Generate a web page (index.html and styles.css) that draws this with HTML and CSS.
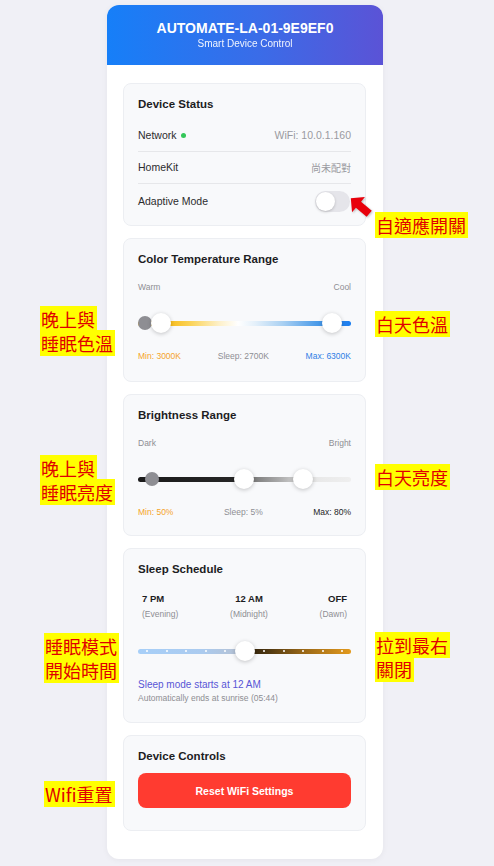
FILE: index.html
```html
<!DOCTYPE html>
<html>
<head>
<meta charset="utf-8">
<link rel="stylesheet" href="styles.css">
</head>
<body>
<div class="page">
  <div class="card">
    <div class="header">
      <div class="title">AUTOMATE-LA-01-9E9EF0</div>
      <div class="subtitle">Smart Device Control</div>
    </div>
    <div class="body">
      <section class="section status">
        <h2 class="sec-title">Device Status</h2>
        <div class="row">
          <span class="row-label">Network <span class="dot"></span></span>
          <span class="row-value">WiFi: 10.0.1.160</span>
        </div>
        <div class="row">
          <span class="row-label">HomeKit</span>
          <span class="row-value cjk">尚未配對</span>
        </div>
        <div class="row last">
          <span class="row-label">Adaptive Mode</span>
          <span class="toggle"><span class="knob"></span></span>
        </div>
      </section>

      <section class="section range">
        <h2 class="sec-title">Color Temperature Range</h2>
        <div class="ends"><span>Warm</span><span>Cool</span></div>
        <div class="slider">
          <div class="track temp"></div>
          <span class="marker" style="left:3.3%"></span>
          <span class="thumb" style="left:10.8%"></span>
          <span class="thumb" style="left:91%"></span>
        </div>
        <div class="vals"><span class="orange">Min: 3000K</span><span class="gray">Sleep: 2700K</span><span class="blue">Max: 6300K</span></div>
      </section>

      <section class="section range brightness">
        <h2 class="sec-title">Brightness Range</h2>
        <div class="ends"><span>Dark</span><span>Bright</span></div>
        <div class="slider">
          <div class="track bright"></div>
          <span class="marker" style="left:6.6%"></span>
          <span class="thumb" style="left:49.8%"></span>
          <span class="thumb" style="left:77.5%"></span>
        </div>
        <div class="vals"><span class="orange">Min: 50%</span><span class="gray">Sleep: 5%</span><span class="dark">Max: 80%</span></div>
      </section>

      <section class="section sleep">
        <h2 class="sec-title">Sleep Schedule</h2>
        <div class="times">
          <div class="tcol left"><div class="t">7 PM</div><div class="ts">(Evening)</div></div>
          <div class="tcol center"><div class="t">12 AM</div><div class="ts">(Midnight)</div></div>
          <div class="tcol right"><div class="t">OFF</div><div class="ts">(Dawn)</div></div>
        </div>
        <div class="slider sleep-slider">
          <div class="track sleepbar">
            <i></i><i></i><i></i><i></i><i></i><i></i><i></i><i></i><i></i><i></i><i></i>
          </div>
          <span class="thumb" style="left:50.2%"></span>
        </div>
        <div class="sleep-msg">Sleep mode starts at 12 AM</div>
        <div class="sleep-sub">Automatically ends at sunrise (05:44)</div>
      </section>

      <section class="section controls">
        <h2 class="sec-title">Device Controls</h2>
        <button class="reset">Reset WiFi Settings</button>
      </section>
    </div>
  </div>

  <svg class="arrow" width="28" height="28" viewBox="0 0 28 28">
    <g transform="rotate(40 14 14)">
      <polygon points="2,14 12,4 12,10 26,10 26,18 12,18 12,24" fill="#e8000b"/>
    </g>
  </svg>

  <div class="note n-adaptive"><span>自適應開關</span></div>
  <div class="note n-temp-night"><span>晚上與</span><br><span>睡眠色溫</span></div>
  <div class="note n-temp-day"><span>白天色溫</span></div>
  <div class="note n-bri-night"><span>晚上與</span><br><span>睡眠亮度</span></div>
  <div class="note n-bri-day"><span>白天亮度</span></div>
  <div class="note n-sleep"><span>睡眠模式</span><br><span>開始時間</span></div>
  <div class="note n-off"><span>拉到最右</span><br><span>關閉</span></div>
  <div class="note n-wifi"><span>Wifi重置</span></div>
</div>
</body>
</html>
```

FILE: styles.css
```css
* { box-sizing: border-box; }
html, body { margin: 0; padding: 0; }
body {
  background: #f0f0f6;
  font-family: "Liberation Sans", Arial, "Noto Sans CJK TC", sans-serif;
  color: #1d1d1f;
}
.page {
  position: relative;
  width: 494px;
  height: 866px;
  padding: 5px 0 0 107px;
}
.card {
  width: 276px;
  background: #fff;
  border-radius: 12px;
  overflow: hidden;
  box-shadow: 0 1px 6px rgba(0,0,0,0.05);
}
.header {
  height: 60px;
  background: linear-gradient(90deg, #167ff8 0%, #3a6ce8 55%, #5b53d6 100%);
  color: #fff;
  text-align: center;
  padding-top: 15px;
}
.title { font-weight: bold; font-size: 14px; line-height: 16px; }
.subtitle { font-size: 10px; line-height: 13px; margin-top: 1px; opacity: 0.92; }
.body {
  padding: 18px 17px 28px 16px;
  display: flex;
  flex-direction: column;
  gap: 12px;
}
.section {
  background: #f8f9fb;
  border: 1px solid #eceef2;
  border-radius: 8px;
  padding: 12px 14px 19px 14px;
}
.sec-title {
  margin: 0;
  font-size: 11.5px;
  line-height: 16px;
  font-weight: bold;
  color: #1d1d1f;
}
/* status */
.section.status { padding-bottom: 6px; }
.row {
  display: flex;
  justify-content: space-between;
  align-items: center;
  font-size: 10.5px;
  line-height: 15px;
  padding: 8px 0;
  border-bottom: 1px solid #e6e7ea;
}
.row:first-of-type { margin-top: 8px; }
.row.last { border-bottom: none; padding: 7px 0; }
.row-label { color: #2c2c2e; display: flex; align-items: center; gap: 4px; }
.row-value { color: #9a9aa0; }
.cjk { font-family: "Noto Sans CJK TC", sans-serif; font-size: 10px; }
.dot { width: 5px; height: 5px; border-radius: 50%; background: #34c759; display: inline-block; }
.toggle {
  width: 35px; height: 21px; border-radius: 11px;
  background: #e5e5ea; position: relative; margin-right: 1px;
}
.knob {
  position: absolute; left: 1px; top: 1px; width: 19px; height: 19px;
  border-radius: 50%; background: #fff; box-shadow: 0 1px 3px rgba(0,0,0,0.2);
}
/* ranges */
.section.brightness { padding-bottom: 17px; }
.ends {
  display: flex; justify-content: space-between;
  font-size: 8.5px; line-height: 12px; color: #8e8e93;
  margin-top: 14px;
}
.slider {
  position: relative;
  height: 28px;
  margin-top: 16px;
  display: flex;
  align-items: center;
}
.track {
  width: 100%;
  height: 5px;
  border-radius: 3px;
}
.track.temp {
  background: linear-gradient(90deg, #f5ab00 0%, #f6b200 10%, #fbd45a 25%, #fdf0c8 38%, #ffffff 47%, #e4f0fa 55%, #a9d0f2 68%, #4b9be9 84%, #1a7df0 100%);
}
.track.bright {
  background: linear-gradient(90deg, #1a1a1a 0%, #262626 46%, #6f6f6f 51%, #a9a9a9 66%, #d6d6d6 76%, #e9e9e9 85%, #efefef 100%);
}
.marker {
  position: absolute; top: 50%;
  width: 14px; height: 14px; border-radius: 50%;
  background: #8e8e93;
  transform: translate(-50%, -50%);
}
.thumb {
  position: absolute; top: 50%;
  width: 20px; height: 20px; border-radius: 50%;
  background: #fff;
  box-shadow: 0 1px 4px rgba(0,0,0,0.22);
  transform: translate(-50%, -50%);
}
.vals {
  display: flex; justify-content: space-between;
  font-size: 8.5px; line-height: 12px;
  margin-top: 13px;
}
.orange { color: #f5a42a; }
.gray { color: #8e8e93; }
.blue { color: #2f7fe6; }
.dark { color: #1d1d1f; }
/* sleep */
.section.sleep { padding-top: 12px; padding-bottom: 18px; }
.times { display: flex; justify-content: space-between; margin-top: 15px; padding: 0 4px; }
.tcol.left { text-align: left; }
.tcol.center { text-align: center; }
.tcol.right { text-align: right; }
.t { font-size: 9.5px; line-height: 14px; font-weight: bold; color: #1d1d1f; }
.ts { font-size: 8.5px; line-height: 12px; color: #8e8e93; margin-top: 2px; }
.sleep-slider { margin-top: 17px; }
.track.sleepbar {
  height: 5px;
  display: flex; justify-content: space-between; align-items: center;
  padding: 0 8px;
  background: linear-gradient(90deg, #a7cff8 0%, #abcbef 30%, #b4c2d6 46%, #c2c6cc 50%, #2c1f0c 50%, #4a3410 60%, #9a6817 78%, #e39a1d 100%);
}
.track.sleepbar i { display: block; width: 2px; height: 2px; border-radius: 50%; background: #fff; }
.sleep-msg { font-size: 10px; line-height: 13px; color: #5856d6; margin-top: 13px; }
.sleep-sub { font-size: 8.5px; line-height: 12px; color: #8e8e93; margin-top: 1px; }
/* controls */
.section.controls { padding-bottom: 22px; }
.reset {
  display: block; width: 100%; height: 35px; margin-top: 9px;
  border: none; border-radius: 8px;
  background: #ff3b30; color: #fff;
  font-family: "Liberation Sans", Arial, sans-serif;
  font-weight: bold; font-size: 10.5px;
}
/* annotations */
.arrow { position: absolute; left: 346px; top: 192px; filter: drop-shadow(1px 1px 1px rgba(0,0,0,0.25)); }
.note {
  position: absolute;
  font-family: "Noto Sans CJK TC", "Noto Sans CJK SC", sans-serif;
  font-size: 18px;
  line-height: 24px;
  color: #e00000;
}
.note span { background: #ffff00; padding: 0 2px 0 1px; }
.n-adaptive { left: 375px; top: 213px; }
.n-temp-night { left: 40px; top: 307px; }
.n-temp-day { left: 375px; top: 312px; }
.n-bri-night { left: 40px; top: 456px; }
.n-bri-day { left: 375px; top: 465px; }
.n-sleep { left: 44px; top: 634px; }
.n-off { left: 375px; top: 633px; }
.n-wifi { left: 44px; top: 782px; }
```
